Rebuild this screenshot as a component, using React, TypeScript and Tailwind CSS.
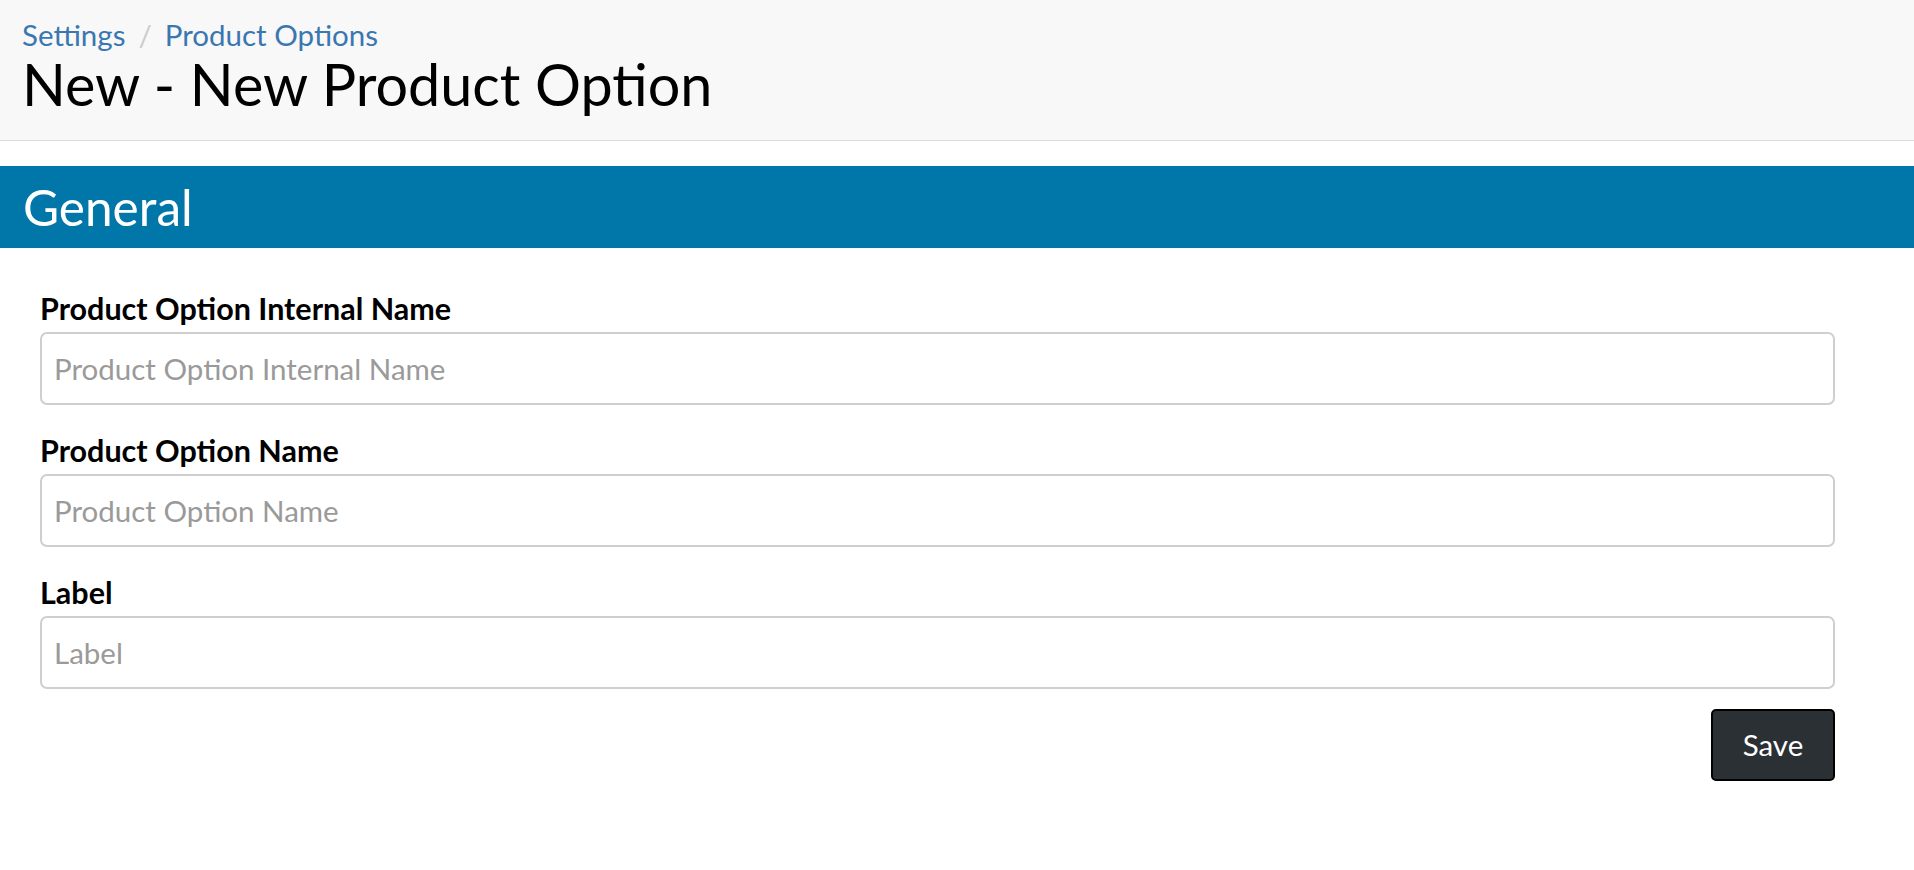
import React from "react";

// Product option edit form

const fields = [
  { label: "Product Option Internal Name", placeholder: "Product Option Internal Name" },
  { label: "Product Option Name", placeholder: "Product Option Name" },
  { label: "Label", placeholder: "Label" },
];

export default function App() {
  return (
    <div className="min-h-screen bg-white font-['Lato',_'Liberation_Sans',_sans-serif] text-black">
      {/* Header */}
      <div className="h-[141px] border-b border-[#dcdcdc] bg-[#f8f8f8] px-[22px] pt-[16px]">
        <nav className="flex items-center gap-[13px] text-[29.5px] leading-[37px]">
          <a className="text-[#3a77b0]">Settings</a>
          <span className="text-[#cccccc]">/</span>
          <a className="text-[#3a77b0]">Product Options</a>
        </nav>
        <h1 className="text-[57.5px] leading-[62px] font-normal">New - New Product Option</h1>
      </div>

      {/* Section bar */}
      <div className="mt-[25px] flex h-[82px] items-center bg-[#0076a9] px-[23px]">
        <h2 className="text-[49.5px] text-white">General</h2>
      </div>

      {/* Form */}
      <form className="pl-[40px] pr-[79px] pt-[43px]">
        {fields.map((f) => (
          <div key={f.label} className="mb-[28px]">
            <label className="block text-[30.5px] font-bold leading-[35px]">{f.label}</label>
            <input
              placeholder={f.placeholder}
              className="mt-[6px] block h-[73px] w-full rounded-[7px] border-2 border-[#cfcfcf] px-[12px] text-[29.5px] placeholder:text-[#9a9a9a] outline-none"
            />
          </div>
        ))}
        <div className="-mt-[8px] flex justify-end">
          <button
            type="button"
            className="h-[72px] w-[124px] rounded-[5px] border-2 border-black bg-[#2b3035] text-[29.5px] text-white"
          >
            Save
          </button>
        </div>
      </form>
    </div>
  );
}
